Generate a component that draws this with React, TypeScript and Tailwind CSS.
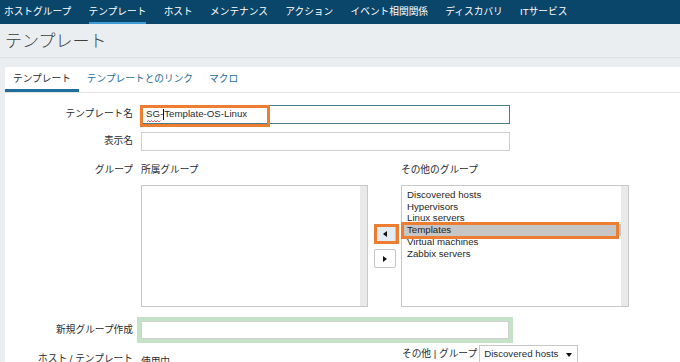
export default function App() {
  const nav = [
    "ホストグループ",
    "テンプレート",
    "ホスト",
    "メンテナンス",
    "アクション",
    "イベント相関関係",
    "ディスカバリ",
    "ITサービス",
  ];
  const groups = [
    "Discovered hosts",
    "Hypervisors",
    "Linux servers",
    "Templates",
    "Virtual machines",
    "Zabbix servers",
  ];
  return (
    <div className="h-[362px] w-[680px] overflow-hidden bg-[#ebeef0] [font-family:'Liberation_Sans','Noto_Sans_CJK_JP',sans-serif] text-[9.7px] text-[#1f2c33]">
      {/* top nav */}
      <div className="h-[24px] bg-[#0a466a] flex items-stretch pl-[4px] gap-[17.3px] text-white">
        {nav.map((n, i) => (
          <div
            key={n}
            className={
              i === 1
                ? "flex items-center border-b-[2px] border-[#3e9bd6] pt-[2px] leading-none"
                : "flex items-center leading-none"
            }
          >
            {n}
          </div>
        ))}
      </div>

      {/* header */}
      <div className="h-[34px] border-b border-[#dde2e5] pl-[5px] pt-[2px] flex items-center">
        <h1 className="text-[17px] font-light text-[#3d3d3d] leading-none">テンプレート</h1>
      </div>

      {/* panel */}
      <div className="mt-[9px] ml-[5px] bg-white h-[300px]">
        {/* tabs */}
        <div className="h-[26px] border-b border-[#e3e3e3] flex items-stretch">
          <div className="px-[8px] flex items-center border-b-[3px] border-[#1f6e9e] pt-[3px] text-[#1f2c33]">
            テンプレート
          </div>
          <div className="px-[8px] flex items-center text-[#1f6c96]">テンプレートとのリンク</div>
          <div className="px-[8px] flex items-center text-[#1f6c96]">マクロ</div>
        </div>

        {/* form */}
        <div className="pt-[12px]">
          {/* row 1 */}
          <div className="flex items-center gap-[8px]">
            <div className="w-[128px] shrink-0 text-right">テンプレート名</div>
            <div className="relative w-[369px] h-[19px] border border-[#4a7d8c] bg-white flex items-center pl-[4px] whitespace-nowrap text-[#1f2c33]">
              <span>SG-</span>
              <span className="inline-block w-[1px] h-[11px] bg-[#111]" />
              <span>Template-OS-Linux</span>
              <svg
                className="absolute left-[5px] top-[14px]"
                width="14"
                height="3"
                viewBox="0 0 14 3"
              >
                <path
                  d="M0 2 L1.5 0.5 L3 2 L4.5 0.5 L6 2 L7.5 0.5 L9 2 L10.5 0.5 L12 2 L13.5 0.5"
                  fill="none"
                  stroke="#e0403a"
                  strokeWidth="0.8"
                />
              </svg>
              <div className="absolute left-[-2px] top-[-1px] w-[130px] h-[22px] border-[3px] border-[#ed7d31]" />
            </div>
          </div>

          {/* row 2 */}
          <div className="mt-[8px] flex items-center gap-[8px]">
            <div className="w-[128px] shrink-0 text-right">表示名</div>
            <div className="w-[369px] h-[19px] border border-[#cfcfcf] bg-white" />
          </div>

          {/* row 3 groups */}
          <div className="mt-[12px] flex gap-[8px]">
            <div className="w-[128px] shrink-0 text-right leading-[14px]">グループ</div>
            <div className="flex flex-col">
              <div className="flex leading-[14px]">
                <div className="w-[260px]">所属グループ</div>
                <div>その他のグループ</div>
              </div>
              <div className="mt-[8px] flex h-[122px]">
                <div className="w-[227px] h-full border border-[#c8c8c8] flex">
                  <div className="flex-1" />
                  <div className="w-[7px] bg-[#e9e9e9]" />
                </div>
                <div className="w-[33px] flex flex-col pl-[6px] pt-[39px] gap-[6px]">
                  <div className="relative w-[22px] h-[19px] border border-[#c4c4c4] rounded-[2px] bg-[#e3ecf3] flex items-center justify-center">
                    <svg width="4" height="6" viewBox="0 0 4 6">
                      <polygon points="4,0 4,6 0,3" fill="#111" />
                    </svg>
                    <div className="absolute left-[-1px] top-[-1px] w-[25px] h-[20px] border-[3px] border-[#ed7d31]" />
                  </div>
                  <div className="w-[22px] h-[19px] border border-[#c4c4c4] rounded-[2px] bg-white flex items-center justify-center">
                    <svg width="4" height="6" viewBox="0 0 4 6">
                      <polygon points="0,0 4,3 0,6" fill="#111" />
                    </svg>
                  </div>
                </div>
                <div className="w-[228px] h-full border border-[#c8c8c8] flex">
                  <div className="flex-1 pt-[3px] text-[#1f1f1f]">
                    {groups.map((g) =>
                      g === "Templates" ? (
                        <div key={g} className="relative leading-[11.7px] px-[5px] bg-[#c6c6c6] whitespace-nowrap">
                          {g}
                          <div className="absolute left-[-1px] top-[-2px] right-[2px] bottom-[-3px] border-[3px] border-[#ed7d31]" />
                        </div>
                      ) : (
                        <div key={g} className="leading-[11.7px] px-[5px] whitespace-nowrap">
                          {g}
                        </div>
                      )
                    )}
                  </div>
                  <div className="w-[7px] bg-[#e9e9e9]" />
                </div>
              </div>
            </div>
          </div>

          {/* row 4 */}
          <div className="mt-[10px] flex items-center gap-[8px]">
            <div className="w-[128px] shrink-0 text-right">新規グループ作成</div>
            <div className="-ml-[4px] w-[376px] h-[26px] border-[4px] border-[#c5e1c7]">
              <div className="h-full bg-white border border-[#cfcfcf]" />
            </div>
          </div>

          {/* row 5 */}
          <div className="mt-[2px] flex gap-[8px]">
            <div className="w-[128px] shrink-0 text-right pt-[8px] leading-[12px]">ホスト / テンプレート</div>
            <div className="flex">
              <div className="w-[261px] pt-[11px] leading-[12px]">使用中</div>
              <div className="flex items-center gap-[2px] h-[19px]">
                <span>その他 | グループ</span>
                <div className="w-[99px] h-[19px] border border-[#c8c8c8] bg-white flex items-center justify-between pl-[4px] pr-[5px]">
                  <span className="whitespace-nowrap">Discovered hosts</span>
                  <svg width="6" height="4" viewBox="0 0 6 4">
                    <polygon points="0,0 6,0 3,4" fill="#111" />
                  </svg>
                </div>
              </div>
            </div>
          </div>
        </div>
      </div>
    </div>
  );
}
